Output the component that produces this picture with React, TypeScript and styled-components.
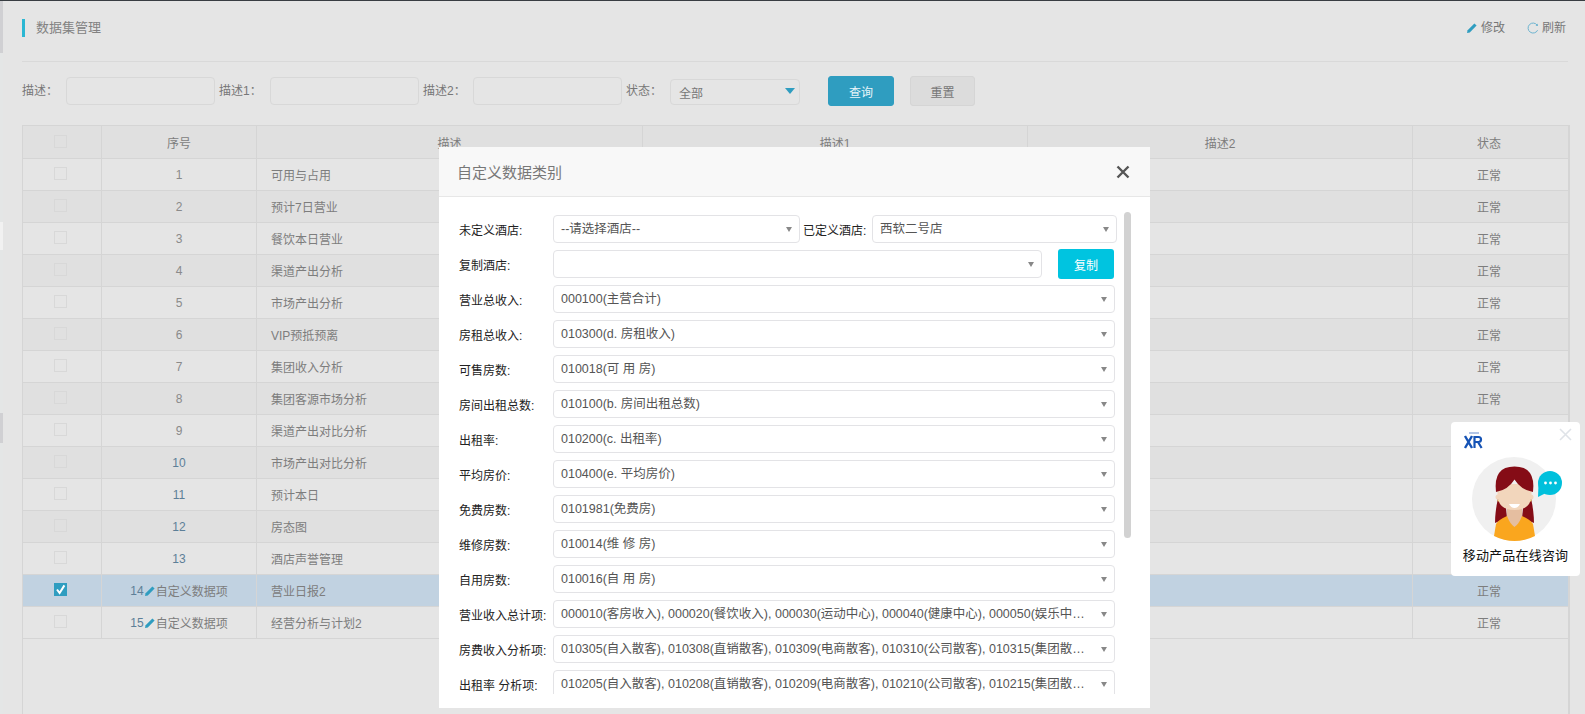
import { createGlobalStyle, styled } from "styled-components";

const GlobalStyle = createGlobalStyle`
  html, body {
    margin: 0;
    padding: 0;
    height: 100%;
    overflow: hidden;
    background: #e5e5e5;
    font-family: "Liberation Sans", "Noto Sans CJK SC", sans-serif;
    font-size: 12px;
  }
  * {
    box-sizing: border-box;
  }
`;

const Page = styled.div`
  width: 1585px;
  height: 714px;
  display: flex;
  border-top: 1px solid #383d42;
  background: #e5e5e5;
  overflow: hidden;
`;
const SideStrip = styled.div`
  width: 3px;
  flex: none;
  display: flex;
  flex-direction: column;
  background: #e4e6e6;
`;
const StripPiece = styled.div<{ $h: number; $c?: string }>`
  height: ${(p) => p.$h}px;
  background: ${(p) => p.$c || "transparent"};
`;
const Main = styled.div`
  flex: 1;
  padding-left: 19px;
  padding-right: 17px;
  display: flex;
  flex-direction: column;
`;
const TitleRow = styled.div`
  height: 61px;
  flex: none;
  border-bottom: 1px solid #d9d9d9;
  display: flex;
  justify-content: space-between;
  padding-top: 18px;
`;
const PageTitle = styled.div`
  height: 18px;
  border-left: 3px solid #2bb7d3;
  padding-left: 11px;
  font-size: 13px;
  line-height: 18px;
  color: #828282;
`;
const Actions = styled.div`
  display: flex;
  gap: 22px;
  height: 18px;
  padding-right: 2px;
`;
const Action = styled.span`
  display: flex;
  align-items: center;
  gap: 3px;
  color: #777;
  line-height: 18px;
`;
const Filters = styled.div`
  height: 63px;
  flex: none;
  display: flex;
  align-items: flex-start;
  padding-top: 15px;
`;
const FilterLabel = styled.span<{ $w: number }>`
  width: ${(p) => p.$w}px;
  flex: none;
  line-height: 28px;
  color: #777;
`;
const FilterInput = styled.div`
  width: 149px;
  height: 28px;
  flex: none;
  margin-right: 4px;
  border: 1px solid #d8d8d8;
  border-radius: 4px;
`;
const FilterSelect = styled.div`
  position: relative;
  width: 130px;
  height: 26px;
  margin-top: 2px;
  margin-right: 28px;
  padding-left: 8px;
  flex: none;
  border: 1px solid #d8d8d8;
  border-radius: 4px;
  line-height: 29px;
  color: #777;
  &::after {
    content: "";
    position: absolute;
    right: 4px;
    top: 8px;
    border-top: 6px solid #2f9dc0;
    border-left: 5px solid transparent;
    border-right: 5px solid transparent;
  }
`;
const FilterButton = styled.button<{ $primary?: boolean }>`
  width: ${(p) => (p.$primary ? 66 : 65)}px;
  height: 30px;
  margin-top: -1px;
  margin-right: 16px;
  flex: none;
  padding: 0;
  font: inherit;
  border-radius: 3px;
  border: 1px solid ${(p) => (p.$primary ? "#2f9dc0" : "#d5d5d5")};
  background: ${(p) => (p.$primary ? "#2f9dc0" : "#dcdcdc")};
  color: ${(p) => (p.$primary ? "#e9f5f9" : "#777")};
`;
const TableFrame = styled.div`
  flex: 1;
  border-left: 1px solid #d5d5d5;
  border-right: 2px solid #d5d5d5;
  border-top: 1px solid #d5d5d5;
  margin-right: -2px;
`;
const Row = styled.div<{ $head?: boolean; $alt?: boolean; $active?: boolean }>`
  display: grid;
  grid-template-columns: 79px 155px 386px 385px 385px 1fr;
  height: ${(p) => (p.$head ? 33 : 32)}px;
  border-bottom: 1px solid #d5d5d5;
  background: ${(p) =>
    p.$active ? "#c1d2e1" : p.$alt || p.$head ? "#e0e0e0" : "#e5e5e5"};
  color: #7d7d7d;
`;
const Cell = styled.div<{ $left?: boolean }>`
  display: flex;
  align-items: center;
  justify-content: ${(p) => (p.$left ? "flex-start" : "center")};
  padding-left: ${(p) => (p.$left ? "14px" : "0")};
  border-right: 1px solid #d5d5d5;
  white-space: nowrap;
  &:last-child {
    border-right: 0;
    padding-right: 3px;
  }
`;
const NumCell = styled(Cell)<{ $blue?: boolean }>`
  color: ${(p) => (p.$blue ? "#5d7f98" : "#8a8a8a")};
`;
const CheckBox = styled.span<{ $on?: boolean }>`
  width: 13px;
  height: 13px;
  margin-top: -2px;
  margin-right: 3px;
  display: flex;
  align-items: center;
  justify-content: center;
  border: 1px solid ${(p) => (p.$on ? "#2f9dc0" : "#d8d8d8")};
  background: ${(p) => (p.$on ? "#2f9dc0" : "transparent")};
`;
const Custom = styled.span`
  display: flex;
  align-items: center;
  color: #7d7d7d;
`;
const Modal = styled.div`
  position: fixed;
  left: 439px;
  top: 147px;
  width: 711px;
  height: 561px;
  background: #fff;
  display: flex;
  flex-direction: column;
`;
const ModalHeader = styled.div`
  height: 50px;
  flex: none;
  background: #f8f8f8;
  border-bottom: 1px solid #e7e7e7;
  display: flex;
  align-items: center;
  justify-content: space-between;
  padding: 0 20px 0 18px;
  font-size: 15px;
  color: #777;
`;
const ModalBody = styled.div`
  position: relative;
  height: 497px;
  flex: none;
  padding: 18px 0 0 20px;
  overflow: hidden;
  display: flex;
  flex-direction: column;
`;
const Scrollbar = styled.div`
  position: absolute;
  right: 19px;
  top: 15px;
  width: 7px;
  height: 326px;
  border-radius: 4px;
  background: #d2d2d2;
`;
const FormRow = styled.div`
  height: 28px;
  flex: none;
  margin-bottom: 7px;
  display: flex;
  align-items: center;
`;
const FormLabel = styled.label<{ $w?: number; $pad?: number }>`
  width: ${(p) => p.$w || 94}px;
  flex: none;
  padding-left: ${(p) => p.$pad || 0}px;
  color: #222;
  white-space: nowrap;
`;
const SelectBox = styled.div<{ $w: number }>`
  position: relative;
  width: ${(p) => p.$w}px;
  height: 28px;
  flex: none;
  padding: 0 20px 0 7px;
  border: 1px solid #e3e3e6;
  border-radius: 4px;
  font-size: 12.5px;
  color: #555;
  line-height: 26px;
  white-space: nowrap;
  overflow: hidden;
  text-overflow: ellipsis;
  &::after {
    content: "";
    position: absolute;
    right: 7px;
    top: 11px;
    border-top: 5px solid #888;
    border-left: 3px solid transparent;
    border-right: 3px solid transparent;
  }
`;
const CopyButton = styled.button`
  width: 56px;
  height: 30px;
  margin-left: 16px;
  flex: none;
  padding: 0;
  border: 0;
  border-radius: 3px;
  background: #00c4e0;
  color: #fff;
  font: inherit;
`;
const Widget = styled.div`
  position: fixed;
  left: 1451px;
  top: 422px;
  width: 129px;
  height: 154px;
  border-radius: 4px;
  background: #fff;
  display: flex;
  flex-direction: column;
  align-items: center;
`;
const WidgetClose = styled.svg`
  position: absolute;
  right: 8px;
  top: 6px;
`;
const WidgetLogo = styled.svg`
  position: absolute;
  left: 12px;
  top: 9px;
`;
const WidgetAvatar = styled.svg`
  margin-top: 34px;
  margin-left: 11px;
  flex: none;
`;
const WidgetText = styled.div`
  margin-top: 3px;
  font-size: 13px;
  letter-spacing: 0.2px;
  color: #111;
  white-space: nowrap;
`;

const rows: [string, string, boolean?][] = [
  ["1", "可用与占用"],
  ["2", "预计7日营业"],
  ["3", "餐饮本日营业"],
  ["4", "渠道产出分析"],
  ["5", "市场产出分析"],
  ["6", "VIP预抵预离"],
  ["7", "集团收入分析"],
  ["8", "集团客源市场分析"],
  ["9", "渠道产出对比分析"],
  ["10", "市场产出对比分析", true],
  ["11", "预计本日", true],
  ["12", "房态图", true],
  ["13", "酒店声誉管理", true],
];

const formRows: [string, string][] = [
  ["营业总收入:", "000100(主营合计)"],
  ["房租总收入:", "010300(d. 房租收入)"],
  ["可售房数:", "010018(可 用 房)"],
  ["房间出租总数:", "010100(b. 房间出租总数)"],
  ["出租率:", "010200(c. 出租率)"],
  ["平均房价:", "010400(e. 平均房价)"],
  ["免费房数:", "0101981(免费房)"],
  ["维修房数:", "010014(维 修 房)"],
  ["自用房数:", "010016(自 用 房)"],
  [
    "营业收入总计项:",
    "000010(客房收入), 000020(餐饮收入), 000030(运动中心), 000040(健康中心), 000050(娱乐中心), 000060(商品部)",
  ],
  [
    "房费收入分析项:",
    "010305(自入散客), 010308(直销散客), 010309(电商散客), 010310(公司散客), 010315(集团散客), 010320(会议)",
  ],
  [
    "出租率 分析项:",
    "010205(自入散客), 010208(直销散客), 010209(电商散客), 010210(公司散客), 010215(集团散客), 010220(会议)",
  ],
];

function Pencil({ size = 12 }: { size?: number }) {
  return (
    <svg width={size} height={size} viewBox="0 0 12 12">
      <path d="M1 11 L1.6 8.2 L8.4 1.4 L10.6 3.6 L3.8 10.4 Z" fill="#2f9dc0" />
    </svg>
  );
}

function Check() {
  return (
    <svg width="11" height="11" viewBox="0 0 11 11">
      <path d="M2 5.5 L4.6 9 L9.4 1.4" fill="none" stroke="#fff" strokeWidth="2" />
    </svg>
  );
}

function App() {
  return (
    <Page>
      <GlobalStyle />
      <SideStrip>
        <StripPiece $h={52} $c="#d0d0d3" />
        <StripPiece $h={169} />
        <StripPiece $h={28} $c="#f1f1f1" />
        <StripPiece $h={163} />
        <StripPiece $h={30} $c="#d0d0d3" />
      </SideStrip>
      <Main>
        <TitleRow>
          <PageTitle>数据集管理</PageTitle>
          <Actions>
            <Action>
              <Pencil />
              修改
            </Action>
            <Action>
              <svg width="12" height="12" viewBox="0 0 12 12">
                <path
                  d="M10.2 3.2 A5 5 0 1 0 10.6 8.2"
                  fill="none"
                  stroke="#6db4d0"
                  strokeWidth="1"
                />
                <path d="M10.9 1.6 V4 H8.6 Z" fill="#6db4d0" />
              </svg>
              刷新
            </Action>
          </Actions>
        </TitleRow>
        <Filters>
          <FilterLabel $w={44}>描述：</FilterLabel>
          <FilterInput />
          <FilterLabel $w={51}>描述1：</FilterLabel>
          <FilterInput />
          <FilterLabel $w={50}>描述2：</FilterLabel>
          <FilterInput />
          <FilterLabel $w={44}>状态：</FilterLabel>
          <FilterSelect>全部</FilterSelect>
          <FilterButton $primary>查询</FilterButton>
          <FilterButton>重置</FilterButton>
        </Filters>
        <TableFrame>
          <Row $head>
            <Cell>
              <CheckBox />
            </Cell>
            <Cell>序号</Cell>
            <Cell>描述</Cell>
            <Cell>描述1</Cell>
            <Cell>描述2</Cell>
            <Cell>状态</Cell>
          </Row>
          {rows.map(([num, name, blue], i) => (
            <Row key={num} $alt={i % 2 === 1}>
              <Cell>
                <CheckBox />
              </Cell>
              <NumCell $blue={blue}>{num}</NumCell>
              <Cell $left>{name}</Cell>
              <Cell />
              <Cell />
              <Cell>正常</Cell>
            </Row>
          ))}
          <Row $active>
            <Cell>
              <CheckBox $on>
                <Check />
              </CheckBox>
            </Cell>
            <NumCell $blue>
              14
              <Pencil />
              <Custom>自定义数据项</Custom>
            </NumCell>
            <Cell $left>营业日报2</Cell>
            <Cell />
            <Cell />
            <Cell>正常</Cell>
          </Row>
          <Row>
            <Cell>
              <CheckBox />
            </Cell>
            <NumCell $blue>
              15
              <Pencil />
              <Custom>自定义数据项</Custom>
            </NumCell>
            <Cell $left>经营分析与计划2</Cell>
            <Cell />
            <Cell />
            <Cell>正常</Cell>
          </Row>
        </TableFrame>
      </Main>
      <Modal>
        <ModalHeader>
          自定义数据类别
          <svg width="14" height="14" viewBox="0 0 14 14">
            <path
              d="M1.5 1.5 L12.5 12.5 M12.5 1.5 L1.5 12.5"
              stroke="#555"
              strokeWidth="2.4"
            />
          </svg>
        </ModalHeader>
        <ModalBody>
          <FormRow>
            <FormLabel>未定义酒店:</FormLabel>
            <SelectBox $w={247}>--请选择酒店--</SelectBox>
            <FormLabel $w={72} $pad={3}>
              已定义酒店:
            </FormLabel>
            <SelectBox $w={245}>西软二号店</SelectBox>
          </FormRow>
          <FormRow>
            <FormLabel>复制酒店:</FormLabel>
            <SelectBox $w={489} />
            <CopyButton>复制</CopyButton>
          </FormRow>
          {formRows.map(([label, value]) => (
            <FormRow key={label}>
              <FormLabel>{label}</FormLabel>
              <SelectBox $w={562}>{value}</SelectBox>
            </FormRow>
          ))}
          <Scrollbar />
        </ModalBody>
      </Modal>
      <Widget>
        <WidgetLogo width="20" height="18" viewBox="0 0 20 18">
          <path d="M2 5 L9 17 M9 5 L2 17" stroke="#1553b5" strokeWidth="2.4" fill="none" />
          <path
            d="M11.5 17 V6 H15.5 Q18 6 18 8.5 Q18 11 15.5 11 H11.5 M15 11 L18.6 17"
            stroke="#1553b5"
            strokeWidth="2.2"
            fill="none"
          />
          <path d="M6 2 H16" stroke="#7f9fd6" strokeWidth="1.2" />
        </WidgetLogo>
        <WidgetClose width="13" height="13" viewBox="0 0 13 13">
          <path d="M1 1 L12 12 M12 1 L1 12" stroke="#dfe3e8" strokeWidth="1.6" />
        </WidgetClose>
        <WidgetAvatar width="100" height="86" viewBox="0 0 100 86">
          <circle cx="43" cy="43" r="42" fill="#f0f0f0" />
          <path d="M27 42 Q24 56 24 67 L36 62 L34 42 Z" fill="#850c16" />
          <path d="M60 42 Q63 56 63 67 L51 62 L53 42 Z" fill="#850c16" />
          <path
            d="M23 80 L25 68 Q27 64 36 60 H51 Q60 64 62 68 L64 80 Q54 85 43.5 85 Q33 85 23 80 Z"
            fill="#faa61e"
          />
          <path d="M36 48 H51 V60 Q48 68 43.5 71 Q39 68 36 60 Z" fill="#e5bea0" />
          <circle cx="27" cy="41" r="2.5" fill="#f2d6bc" />
          <circle cx="60" cy="41" r="2.5" fill="#f2d6bc" />
          <circle cx="27.5" cy="44.5" r="1" fill="#f5d94e" />
          <circle cx="59.5" cy="44.5" r="1" fill="#f5d94e" />
          <path d="M26.5 28 V38 Q26.5 54 43.5 54 Q60.5 54 60.5 38 V28 Z" fill="#f2d6bc" />
          <path d="M38 48 H49 Q47 52 43.5 52 Q40 52 38 48 Z" fill="#fff" />
          <path
            d="M25 36 Q22 10.5 43.5 10.5 Q65 10.5 62 36 Q50 34 43.5 23.5 Q37 34 25 36 Z"
            fill="#850c16"
          />
          <circle cx="79" cy="27" r="12" fill="#00c0dc" />
          <path d="M67.5 28 L67 41 L75 37 Z" fill="#00c0dc" />
          <circle cx="74.5" cy="27" r="1.4" fill="#fff" />
          <circle cx="79.5" cy="27" r="1.4" fill="#fff" />
          <circle cx="84.5" cy="27" r="1.4" fill="#fff" />
        </WidgetAvatar>
        <WidgetText>移动产品在线咨询</WidgetText>
      </Widget>
    </Page>
  );
}

export default App;
